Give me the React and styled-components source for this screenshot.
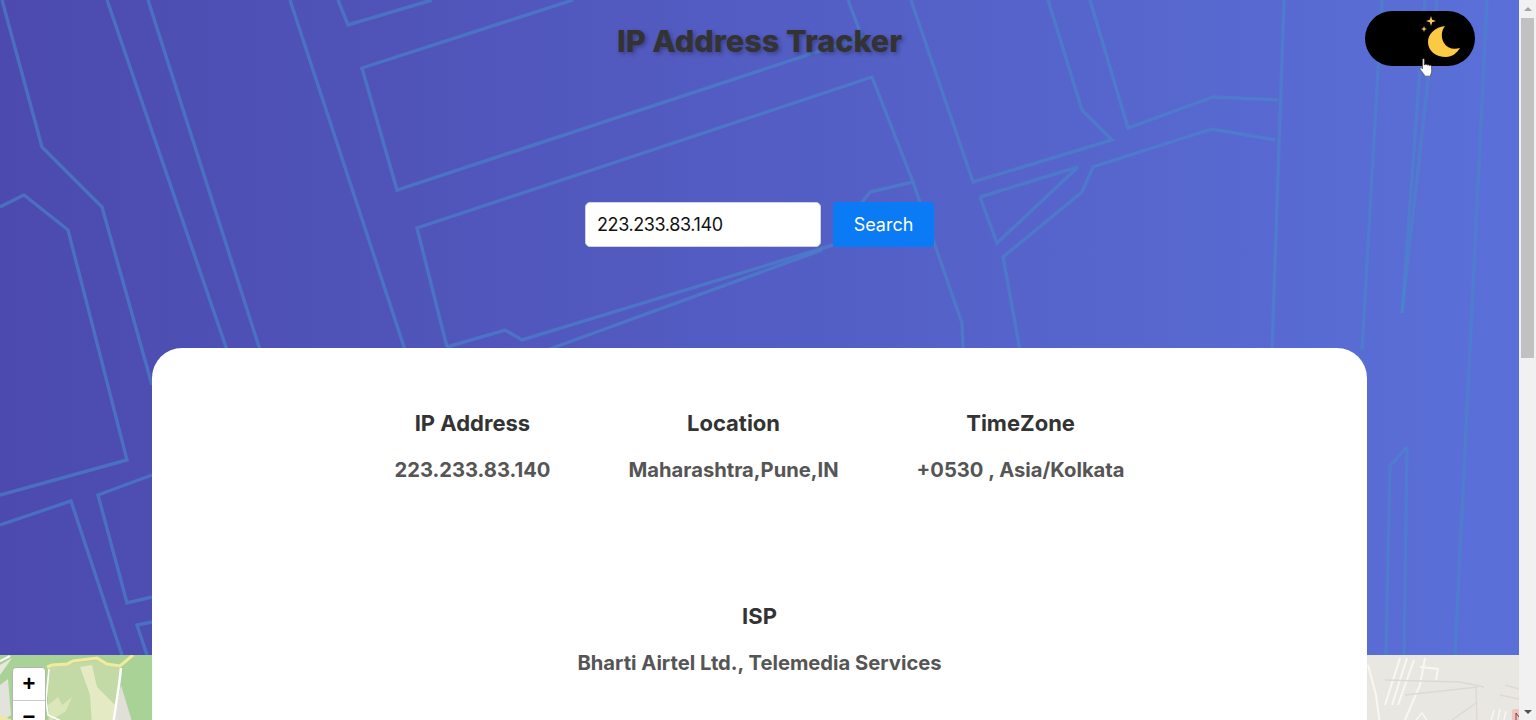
import styled, { createGlobalStyle } from "styled-components"

const GlobalStyle = createGlobalStyle`
    body {
        margin: 0;
        font-family: "Inter", "Liberation Sans", sans-serif;
        background: #ffffff;
    }
`

const stats = [
    [
        { title: "IP Address", value: "223.233.83.140" },
        { title: "Location", value: "Maharashtra,Pune,IN" },
        { title: "TimeZone", value: "+0530 , Asia/Kolkata" },
    ],
    [
        { title: "ISP", value: "Bharti Airtel Ltd., Telemedia Services" },
    ],
]

// traced from the background picture of the header
const heroLines = [
    "0,207 24,195 68,230 127,460 0,495",
    "2,0 42,147 102,207 152,385",
    "0,525 71,501 122,655",
    "152,475 98,495 127,603 152,597",
    "152,622 137,625 147,655",
    "107,0 227,350",
    "148,0 260,350",
    "290,0 405,350",
    "338,0 348,25 432,0",
    "573,0 362,68 397,190 862,37 848,0",
    "447,347 417,228 872,77 913,182 870,192 860,205",
    "447,347 505,330 522,340 833,245",
    "547,350 822,250",
    "913,182 962,323 963,350",
    "911,0 973,182 1112,140 1082,110 1048,0",
    "1090,0 1128,128 1213,97 1278,100",
    "1284,0 1272,350",
    "980,197 1078,167 997,243 980,197",
    "1275,140 1212,129 1093,167 1082,192 1003,257 1020,350",
    "1382,0 1362,350",
    "1425,0 1402,313",
    "1437,0 1402,313",
    "1487,0 1455,655",
    "1407,447 1390,466 1386,655",
    "1407,447 1404,655",
]

const HeroLines = () => (
    <LinesSvg viewBox="0 0 1519 655" preserveAspectRatio="none">
        {heroLines.map(points => (
            <polyline key={points} points={points} fill="none" stroke="#4a84cc" strokeOpacity="0.62" strokeWidth="3.4" />
        ))}
    </LinesSvg>
)

const MoonIcon = () => (
    <svg width="44" height="50" viewBox="0 0 44 50">
        <path
            d="M26 15 C16 16 9 23 9 31 C9 40 17 46 27 46 C33 46 38 42 41 37 C34 39 28 37 25 32 C22 27 22 20 26 15 Z"
            fill="#fcc944"
        />
        <path d="M12 5 L13.2 8.8 L17 10 L13.2 11.2 L12 15 L10.8 11.2 L7 10 L10.8 8.8 Z" fill="#f5c95c" />
        <path d="M5 15 L5.8 17.2 L8 18 L5.8 18.8 L5 21 L4.2 18.8 L2 18 L4.2 17.2 Z" fill="#f5c95c" />
    </svg>
)

const HandCursor = () => (
    <Cursor width="14" height="19" viewBox="0 0 16 22">
        <path
            d="M4 1.5 C4 .5 6 .5 6 1.5 L6 8 L6.8 8 C7 7 8.8 7 9 8 L9.4 8.3 C9.8 7.4 11.4 7.6 11.6 8.6 L12 8.9 C12.4 8.2 14.2 8.4 14.3 9.6 L14.6 15 C14.6 17 13.8 18 13.4 19 L13.4 21 L6 21 L6 19.4 C5 18 2.5 15 1.2 13 C.5 11.8 1.8 10.6 3 11.6 L4 12.6 Z"
            fill="#ffffff"
            stroke="#444444"
            strokeWidth="0.8"
        />
    </Cursor>
)

const MapDrawing = () => (
    <MapSvg viewBox="0 0 1519 70">
        <rect x="0" y="0" width="152" height="70" fill="#a9d296" />
        <rect x="1367" y="0" width="152" height="70" fill="#e9e7e1" />

        <path d="M48 12 L67 9 L97 5 L120 13 L116 70 L48 70 Z" fill="#c3d9a6" />
        <path d="M80 12 L92 10 L97 32 L115 50 L112 70 L92 70 L90 40 Z" fill="#e4ebc4" />
        <path d="M48 50 L58 42 L62 50 L72 42 L66 56 L50 66 Z" fill="#dbe6bb" />
        <path d="M121 30 L133 70 L112 70 Z" fill="#e0e0d8" />
        <path d="M0 30 L8 24 L11 60 L0 68 Z" fill="#e2e3da" />
        <path d="M0 10 L12 3 L0 20 Z" fill="#e8e8e0" />
        <path d="M0 60 L12 65 L0 70 Z" fill="#efe8a4" />

        <polyline points="47,12 52,10 67,9 73,6 97,3 107,9 120,11 133,0" fill="none" stroke="#f2eb9e" strokeWidth="3" />
        <polyline points="121,13 119,30 113,70" fill="none" stroke="#ffffff" strokeWidth="2.5" />
        <polyline points="49,14 46,45 48,60 70,70" fill="none" stroke="#ffffff" strokeWidth="1.6" />
        <polyline points="0,6 10,1" fill="none" stroke="#ffffff" strokeWidth="2" />

        <g fill="none" stroke="#f8f7f3" strokeWidth="2">
            <polyline points="1368,10 1376,40 1380,70" />
            <polyline points="1385,50 1400,3" />
            <polyline points="1392,50 1407,3" />
            <polyline points="1398,50 1414,5" />
            <polyline points="1405,65 1420,30 1425,3" />
            <polyline points="1420,12 1438,14 1436,25" />
        </g>
        <g fill="none" stroke="#dcdad3" strokeWidth="1.4">
            <polyline points="1385,25 1460,27 1484,32" />
            <polyline points="1405,40 1478,32" />
            <polyline points="1476,32 1477,70" />
            <polyline points="1445,70 1476,48" />
            <polyline points="1505,30 1519,34" />
            <polyline points="1500,40 1519,44" />
        </g>
        <g fill="none" stroke="#f8f7f3" strokeWidth="1.5">
            <polyline points="1490,70 1494,55" />
            <polyline points="1497,70 1500,54" />
            <polyline points="1503,70 1506,56" />
            <polyline points="1412,70 1422,58 1430,70" />
        </g>
        <rect x="1512" y="54" width="8" height="16" rx="2" fill="#f2c4c0" />
        <polyline points="1516,65 1516,58 1519,62" fill="none" stroke="#6b4a48" strokeWidth="1" />
    </MapSvg>
)

const App = () => {
    return (
        <>
            <GlobalStyle />
            <Shell>
                <Page>
                    <Hero>
                        <HeroLines />
                        <Header>
                            <Title>IP Address Tracker</Title>
                            <ThemeToggle type="button" aria-label="Toggle theme">
                                <MoonIcon />
                                <HandCursor />
                            </ThemeToggle>
                        </Header>
                        <SearchForm>
                            <IpInput type="text" defaultValue="223.233.83.140" />
                            <SearchButton type="button">Search</SearchButton>
                        </SearchForm>
                        <Card>
                            {stats.map((row, i) => (
                                <StatRow key={i}>
                                    {row.map(stat => (
                                        <Stat key={stat.title}>
                                            <StatTitle>{stat.title}</StatTitle>
                                            <StatValue>{stat.value}</StatValue>
                                        </Stat>
                                    ))}
                                </StatRow>
                            ))}
                        </Card>
                    </Hero>
                    <MapPane>
                        <MapDrawing />
                        <ZoomControl>
                            <ZoomButton>+</ZoomButton>
                            <ZoomButton>−</ZoomButton>
                        </ZoomControl>
                    </MapPane>
                </Page>
                <Scrollbar>
                    <ScrollArrow $up />
                    <ScrollThumb />
                    <ScrollSpacer />
                    <ScrollArrow />
                </Scrollbar>
            </Shell>
        </>
    )
}

const Shell = styled.div`
    display: flex;
    height: 100vh;
    overflow: hidden;
`

const Page = styled.div`
    flex: 1;
    min-width: 0;
    display: flex;
    flex-direction: column;
    overflow: hidden;
`

const Hero = styled.section`
    position: relative;
    z-index: 2;
    flex-shrink: 0;
    height: 655px;
    background: linear-gradient(to right, #4c4aae, #5a70d8);
    display: flex;
    flex-direction: column;
`

const LinesSvg = styled.svg`
    position: absolute;
    inset: 0;
    width: 100%;
    height: 100%;
    filter: blur(0.5px);
`

const Header = styled.header`
    position: relative;
    display: grid;
    grid-template-columns: 1fr auto 1fr;
    align-items: start;
    padding: 11px 44px 0 0;
`

const Title = styled.h1`
    grid-column: 2;
    margin: 9px 0 0 44px;
    font-size: 30.6px;
    line-height: 42px;
    font-weight: 800;
    color: #333333;
    text-shadow: 2px 2px 4px rgba(0, 0, 0, 0.3);
`

const ThemeToggle = styled.button`
    grid-column: 3;
    justify-self: end;
    position: relative;
    width: 110px;
    height: 55px;
    padding: 0 12px 0 0;
    border: none;
    border-radius: 28px;
    background: #000000;
    display: flex;
    align-items: flex-start;
    justify-content: flex-end;
`

const Cursor = styled.svg`
    position: absolute;
    left: 54px;
    top: 47px;
`

const SearchForm = styled.form`
    position: relative;
    margin-top: 136px;
    display: flex;
    justify-content: center;
    gap: 12px;
`

const IpInput = styled.input`
    box-sizing: border-box;
    width: 236px;
    height: 45px;
    padding: 0 11px;
    border: 1px solid #ced4da;
    border-radius: 5px;
    background: #ffffff;
    color: #111111;
    font-family: "Inter", sans-serif;
    font-size: 18px;
    letter-spacing: -0.4px;
    outline: none;
`

const SearchButton = styled.button`
    width: 101px;
    height: 45px;
    border: none;
    border-radius: 4px;
    background: #0a7bf5;
    color: #ffffff;
    font-family: "Inter", sans-serif;
    font-size: 18px;
`

const Card = styled.div`
    position: relative;
    flex-shrink: 0;
    box-sizing: border-box;
    width: 1215px;
    height: 520px;
    margin: 101px auto 0;
    padding-top: 61px;
    border-radius: 30px;
    background: #ffffff;
    display: flex;
    flex-direction: column;
    gap: 119px;
`

const StatRow = styled.div`
    display: flex;
    justify-content: center;
    gap: 78px;
`

const Stat = styled.div`
    display: flex;
    flex-direction: column;
    align-items: center;
    gap: 20px;
`

const StatTitle = styled.h3`
    margin: 0;
    font-size: 22px;
    line-height: 28px;
    font-weight: 700;
    color: #333333;
`

const StatValue = styled.p`
    margin: 0;
    font-size: 20.2px;
    line-height: 26px;
    font-weight: 700;
    color: #555555;
`

const MapPane = styled.div`
    position: relative;
    flex-shrink: 0;
    height: 798px;
    background: #e9e7e1;
`

const MapSvg = styled.svg`
    display: block;
    width: 100%;
    height: 70px;
`

const ZoomControl = styled.div`
    position: absolute;
    top: 12px;
    left: 12px;
    width: 34px;
    border: 1px solid #b5b5b0;
    border-radius: 4px;
    background: #ffffff;
    box-sizing: border-box;
`

const ZoomButton = styled.div`
    height: 32px;
    display: flex;
    align-items: center;
    justify-content: center;
    font-family: "Liberation Sans", Arial, sans-serif;
    font-size: 22px;
    font-weight: 700;
    color: #000000;
    border-bottom: 1px solid #cccccc;
`

const Scrollbar = styled.div`
    flex: 0 0 17px;
    display: flex;
    flex-direction: column;
    background: #f1f1f1;
`

const ScrollArrow = styled.div`
    flex: 0 0 17px;
    display: flex;
    align-items: center;
    justify-content: center;

    &::before {
        content: "";
        border-left: 4px solid transparent;
        border-right: 4px solid transparent;
        ${props => props.$up
            ? "border-bottom: 4px solid #a3a3a3;"
            : "border-top: 4px solid #505050;"}
    }
`

const ScrollThumb = styled.div`
    flex: 0 0 340px;
    margin: 1px 2px 0;
    background: #c1c1c1;
`

const ScrollSpacer = styled.div`
    flex: 1;
`

export default App
